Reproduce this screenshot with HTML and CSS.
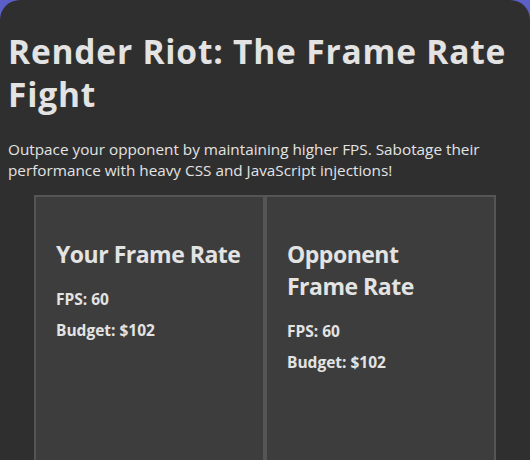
FILE: index.html
```html
<!DOCTYPE html>
<html lang="en">
<head>
<meta charset="utf-8">
<title>Render Riot</title>
<link rel="stylesheet" href="styles.css">
</head>
<body>
<div class="app">
  <h1 class="title">Render Riot: The Frame Rate Fight</h1>
  <p class="intro">Outpace your opponent by maintaining higher FPS. Sabotage their performance with heavy CSS and JavaScript injections!</p>
  <div class="board">
    <section class="panel">
      <h2 class="panel-title">Your Frame Rate</h2>
      <p class="stat">FPS: 60</p>
      <p class="stat">Budget: $102</p>
    </section>
    <section class="panel">
      <h2 class="panel-title">Opponent Frame Rate</h2>
      <p class="stat">FPS: 60</p>
      <p class="stat">Budget: $102</p>
    </section>
  </div>
</div>
</body>
</html>
```
FILE: styles.css
```css
html, body {
  margin: 0;
  padding: 0;
  background: #5b5fc7;
  height: 100%;
}
.app {
  box-sizing: border-box;
  min-height: 100%;
  background: #2f2f2f;
  border-radius: 20px;
  padding: 8px;
  color: #e3e3e3;
  font-family: "Open Sans", "Noto Sans", sans-serif;
  overflow: hidden;
}
.title {
  font-size: 33.5px;
  line-height: 43px;
  letter-spacing: 0.8px;
  font-weight: 700;
  margin: 21.5px 0 23px;
}
.intro {
  font-size: 15.3px;
  line-height: 21.3px;
  margin: 0 0 14px;
}
.board {
  display: flex;
  width: 462px;
  margin: 0 auto;
}
.panel {
  flex: 1 1 0;
  min-width: 0;
  box-sizing: border-box;
  min-height: 320px;
  background: #3d3d3d;
  border: 2px solid #555555;
  padding: 20px;
}
.panel-title {
  font-size: 23px;
  line-height: 32px;
  letter-spacing: -0.5px;
  font-weight: 700;
  margin: 21px 0 19px;
}
.stat {
  font-size: 15.5px;
  line-height: 20px;
  font-weight: 700;
  margin: 11px 0;
}
```
